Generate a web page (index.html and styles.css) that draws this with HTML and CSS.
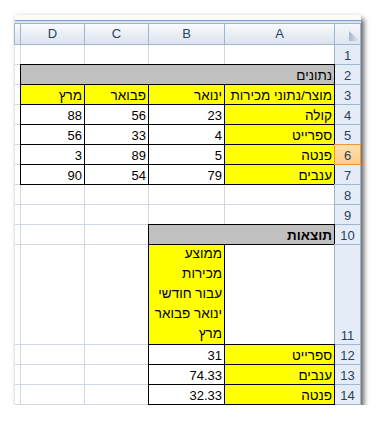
FILE: index.html
```html
<!DOCTYPE html>
<html lang="he">
<head>
    <meta charset="UTF-8">
    <meta name="viewport" content="width=device-width, initial-scale=1.0">
    <title>מכירות</title>
    <link rel="stylesheet" href="styles.css">
</head>
<body>
    <div class="window">
        <div class="window-top"></div>
        <div class="window-band"></div>
        <div class="sheet">
            <!-- column headers -->
            <div class="cell corner">
                <svg width="11" height="10" viewBox="0 0 11 10">
                    <defs>
                        <linearGradient id="tri" x1="0" y1="0" x2="1" y2="0">
                            <stop offset="0" stop-color="#a7b6ca"/>
                            <stop offset="1" stop-color="#e9eef5"/>
                        </linearGradient>
                    </defs>
                    <polygon points="0,0 0,10 11,10" fill="url(#tri)"/>
                </svg>
            </div>
            <div class="cell col-head">A</div>
            <div class="cell col-head">B</div>
            <div class="cell col-head">C</div>
            <div class="cell col-head">D</div>
            <div class="cell col-head"></div>

            <!-- 1 -->
            <div class="cell row-head">1</div>
            <div class="cell"></div><div class="cell"></div><div class="cell"></div><div class="cell"></div><div class="cell"></div>

            <!-- 2 -->
            <div class="cell row-head">2</div>
            <div class="cell box gray span-4">נתונים</div>
            <div class="cell"></div>

            <!-- 3 -->
            <div class="cell row-head">3</div>
            <div class="cell box yellow">מוצר/נתוני מכירות</div>
            <div class="cell box yellow">ינואר</div>
            <div class="cell box yellow">פבואר</div>
            <div class="cell box yellow">מרץ</div>
            <div class="cell"></div>

            <!-- 4 -->
            <div class="cell row-head">4</div>
            <div class="cell box yellow">קולה</div>
            <div class="cell box">23</div>
            <div class="cell box">56</div>
            <div class="cell box">88</div>
            <div class="cell"></div>

            <!-- 5 -->
            <div class="cell row-head">5</div>
            <div class="cell box yellow">ספרייט</div>
            <div class="cell box">4</div>
            <div class="cell box">33</div>
            <div class="cell box">56</div>
            <div class="cell"></div>

            <!-- 6 -->
            <div class="cell row-head active">6</div>
            <div class="cell box yellow">פנטה</div>
            <div class="cell box">5</div>
            <div class="cell box">89</div>
            <div class="cell box">3</div>
            <div class="cell"></div>

            <!-- 7 -->
            <div class="cell row-head">7</div>
            <div class="cell box yellow">ענבים</div>
            <div class="cell box">79</div>
            <div class="cell box">54</div>
            <div class="cell box">90</div>
            <div class="cell"></div>

            <!-- 8 -->
            <div class="cell row-head">8</div>
            <div class="cell"></div><div class="cell"></div><div class="cell"></div><div class="cell"></div><div class="cell"></div>

            <!-- 9 -->
            <div class="cell row-head">9</div>
            <div class="cell"></div><div class="cell"></div><div class="cell"></div><div class="cell"></div><div class="cell"></div>

            <!-- 10 -->
            <div class="cell row-head">10</div>
            <div class="cell box gray bold span-2">תוצאות</div>
            <div class="cell"></div><div class="cell"></div><div class="cell"></div>

            <!-- 11 -->
            <div class="cell row-head">11</div>
            <div class="cell"></div>
            <div class="cell box yellow wrap">
                <div>ממוצע<br>מכירות<br>עבור חודשי<br>ינואר פבואר<br>מרץ</div>
            </div>
            <div class="cell"></div><div class="cell"></div><div class="cell"></div>

            <!-- 12 -->
            <div class="cell row-head">12</div>
            <div class="cell box yellow">ספרייט</div>
            <div class="cell box">31</div>
            <div class="cell"></div><div class="cell"></div><div class="cell"></div>

            <!-- 13 -->
            <div class="cell row-head">13</div>
            <div class="cell box yellow">ענבים</div>
            <div class="cell box">74.33</div>
            <div class="cell"></div><div class="cell"></div><div class="cell"></div>

            <!-- 14 -->
            <div class="cell row-head">14</div>
            <div class="cell box yellow">פנטה</div>
            <div class="cell box">32.33</div>
            <div class="cell"></div><div class="cell"></div><div class="cell"></div>
        </div>
    </div>
</body>
</html>
```

FILE: styles.css
```css
body {
    margin: 0;
    padding: 15px 0 0 15px;
    background: #fff;
    font-family: "Liberation Sans", "DejaVu Sans", sans-serif;
}
.window {
    width: 346px;
    background: #fff;
    box-shadow: 3px 4px 5px rgba(0, 0, 0, 0.6), 0 0 4px rgba(0, 0, 0, 0.12);
}
.window-top {
    height: 5px;
    background: #fbfbfb;
    border-bottom: 1px solid #7b9ccb;
}
.window-band {
    height: 2px;
    background: #d6e1ef;
}
.sheet {
    display: grid;
    direction: rtl;
    grid-template-columns: 25px 109px 75px 63px 63px 5px;
    grid-template-rows: 20px repeat(10, 19px) 99px repeat(3, 19px);
    gap: 1px;
    padding: 1px 1px 1px 0;
    background: #d0d7e5;
    font-size: 13px;
}
.cell {
    display: flex;
    align-items: flex-end;
    padding: 0 2px;
    line-height: 17px;
    background: #fff;
    color: #000;
    white-space: nowrap;
}
.col-head {
    justify-content: center;
    align-items: center;
    line-height: 20px;
    color: #2a3f5a;
    background: linear-gradient(#f9fbfd, #dbe3ee);
    box-shadow: 0 0 0 1px #9eb6ce;
}
.corner {
    align-items: flex-end;
    padding: 0 0 3px 5px;
    background: linear-gradient(#f4f7fb, #dfe6f0);
    box-shadow: 0 0 0 1px #9eb6ce;
}
.row-head {
    justify-content: center;
    color: #2a3f5a;
    background: #e4ecf7;
    box-shadow: 0 0 0 1px #9eb6ce;
}
.row-head.active {
    position: relative;
    background: linear-gradient(#fde0b0, #fbcd8c);
    box-shadow: 0 0 0 1px #f29436;
}
.box {
    box-shadow: 0 0 0 1px #000;
}
/* hebrew labels sit a touch larger than the digits */
.yellow {
    background: #ffff00;
    font-size: 13.5px;
}
.gray {
    background: #c0c0c0;
    font-size: 13.5px;
}
.bold {
    font-weight: bold;
}
.span-4 {
    grid-column: span 4;
}
.span-2 {
    grid-column: span 2;
}
.wrap {
    line-height: 20px;
    white-space: normal;
}
```
